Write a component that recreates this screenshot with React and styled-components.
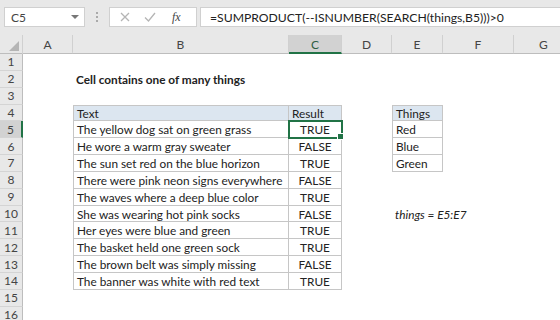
import React from "react";
import styled, { createGlobalStyle } from "styled-components";

const GlobalStyle = createGlobalStyle`
  html, body {
    margin: 0;
    padding: 0;
    background: #fff;
  }
  body {
    font-family: Lato, "Liberation Sans", sans-serif;
    color: #222;
  }
`;

const COLS = ["A", "B", "C", "D", "E", "F", "G"];
const TEMPLATE = "23px 50px 216px 53px 50px 51px 71px 60px";
const GREEN = "#217346";
const LINE = "#c6c6c6";

const Sheet = styled.div`
  width: 560px;
  height: 320px;
  overflow: hidden;
  background: #fff;
`;

const TopBar = styled.div`
  height: 35px;
  box-sizing: border-box;
  padding-top: 7px;
  background: #e8e8e8;
  display: flex;
  align-items: flex-start;
`;

const NameBox = styled.div`
  margin-left: 4px;
  width: 81px;
  height: 20px;
  box-sizing: border-box;
  background: #fff;
  border: 1px solid #d0d0d0;
  display: flex;
  align-items: center;
  justify-content: space-between;
  padding: 0 5px 0 6px;
  font-size: 12px;
  color: #444;
`;

const Arrow = styled.span`
  width: 0;
  height: 0;
  border-left: 4px solid transparent;
  border-right: 4px solid transparent;
  border-top: 4px solid #777;
`;

const Grip = styled.div`
  width: 16px;
  height: 20px;
  margin-left: 4px;
  display: flex;
  flex-direction: column;
  align-items: center;
  justify-content: center;
  gap: 2px;
  & span {
    width: 2px;
    height: 2px;
    background: #aaa;
  }
`;

const FxBox = styled.div`
  margin-left: 4px;
  width: 88px;
  height: 20px;
  box-sizing: border-box;
  background: #fff;
  border: 1px solid #d0d0d0;
  display: flex;
  align-items: center;
  padding-left: 10px;
  gap: 14px;
`;

const Fx = styled.span`
  font-family: "Liberation Serif", serif;
  font-style: italic;
  font-size: 12px;
  color: #444;
  margin-left: 2px;
`;

const Formula = styled.div`
  margin-left: 3px;
  flex: 1;
  height: 20px;
  box-sizing: border-box;
  background: #fff;
  border: 1px solid #d0d0d0;
  border-right: none;
  display: flex;
  align-items: center;
  padding-left: 9px;
  font-size: 12.2px;
  color: #222;
  white-space: nowrap;
`;

const HeadRow = styled.div`
  display: grid;
  grid-template-columns: ${TEMPLATE};
  height: 18px;
  background: #e8e8e8;
  border-bottom: 1px solid #bdbdbd;
`;

const Corner = styled.div`
  position: relative;
  border-right: 1px solid #d0d0d0;
  &::after {
    content: "";
    position: absolute;
    right: 3px;
    bottom: 3px;
    border-left: 10px solid transparent;
    border-bottom: 10px solid #b5b5b5;
  }
`;

const ColHead = styled.div`
  box-sizing: border-box;
  display: flex;
  align-items: center;
  justify-content: center;
  font-size: 12px;
  color: ${(p) => (p.$active ? "#2e5e44" : "#444")};
  background: ${(p) => (p.$active ? "#d2d2d2" : "transparent")};
  border-right: 1px solid #d0d0d0;
  border-bottom: 2px solid ${(p) => (p.$active ? GREEN : "transparent")};
  padding-top: 2px;
`;

const Grid = styled.div`
  display: grid;
  grid-template-columns: ${TEMPLATE};
  grid-auto-rows: 16.85px;
`;

const RowHead = styled.div`
  box-sizing: border-box;
  display: flex;
  align-items: center;
  justify-content: center;
  font-size: 12px;
  color: #444;
  background: ${(p) => (p.$active ? "#d2d2d2" : "#e8e8e8")};
  border-bottom: 1px solid #d4d4d4;
  border-right: ${(p) => (p.$active ? `2px solid ${GREEN}` : "1px solid #bdbdbd")};
`;

const Cell = styled.div`
  position: relative;
  box-sizing: border-box;
  display: flex;
  align-items: center;
  justify-content: ${(p) => (p.$center ? "center" : "flex-start")};
  padding: 1px 3px 0;
  font-size: 11.8px;
  white-space: nowrap;
  font-weight: ${(p) => (p.$bold ? 700 : 400)};
  font-style: ${(p) => (p.$italic ? "italic" : "normal")};
  background: ${(p) => (p.$head ? "#dce6f0" : "transparent")};
  border-right: ${(p) => (p.$boxed ? `1px solid ${LINE}` : "none")};
  border-bottom: ${(p) => (p.$boxed ? `1px solid ${LINE}` : "none")};
  border-left: ${(p) => (p.$left ? `1px solid ${LINE}` : "none")};
  border-top: ${(p) => (p.$top ? `1px solid ${LINE}` : "none")};
  ${(p) =>
    p.$selected &&
    `
    outline: 2px solid ${GREEN};
    outline-offset: -1px;
    z-index: 1;
    &::after {
      content: "";
      position: absolute;
      right: -3px;
      bottom: -3px;
      width: 5px;
      height: 5px;
      background: ${GREEN};
      border: 1px solid #fff;
    }
  `}
`;

const texts = [
  ["The yellow dog sat on green grass", "TRUE"],
  ["He wore a warm gray sweater", "FALSE"],
  ["The sun set red on the blue horizon", "TRUE"],
  ["There were pink neon signs everywhere", "FALSE"],
  ["The waves where a deep blue color", "TRUE"],
  ["She was wearing hot pink socks", "FALSE"],
  ["Her eyes were blue and green", "TRUE"],
  ["The basket held one green sock", "TRUE"],
  ["The brown belt was simply missing", "FALSE"],
  ["The banner was white with red text", "TRUE"],
];
const things = ["Red", "Blue", "Green"];

function cellFor(r, c) {
  if (r === 2 && c === "B") return { text: "Cell contains one of many things", $bold: true };
  if (r === 4 && c === "B") return { text: "Text", $head: true, $boxed: true, $left: true, $top: true };
  if (r === 4 && c === "C") return { text: "Result", $head: true, $boxed: true, $top: true };
  if (r === 4 && c === "E") return { text: "Things", $head: true, $boxed: true, $left: true, $top: true };
  if (r >= 5 && r <= 14 && c === "B") return { text: texts[r - 5][0], $boxed: true, $left: true };
  if (r >= 5 && r <= 14 && c === "C")
    return { text: texts[r - 5][1], $boxed: true, $center: true, $selected: r === 5 };
  if (r >= 5 && r <= 7 && c === "E") return { text: things[r - 5], $boxed: true, $left: true };
  if (r === 10 && c === "E") return { text: "things = E5:E7", $italic: true };
  return { text: "" };
}

const rows = Array.from({ length: 16 }, (_, i) => i + 1);

export default function App() {
  return (
    <Sheet>
      <GlobalStyle />
      <TopBar>
        <NameBox>
          C5
          <Arrow />
        </NameBox>
        <Grip>
          <span />
          <span />
          <span />
        </Grip>
        <FxBox>
          <svg width="10" height="10" viewBox="0 0 10 10">
            <path d="M1 1 L9 9 M9 1 L1 9" stroke="#b5b5b5" strokeWidth="1.3" fill="none" />
          </svg>
          <svg width="12" height="10" viewBox="0 0 12 10">
            <path d="M1 5.5 L4.5 9 L11 1" stroke="#b5b5b5" strokeWidth="1.3" fill="none" />
          </svg>
          <Fx>fx</Fx>
        </FxBox>
        <Formula>=SUMPRODUCT(--ISNUMBER(SEARCH(things,B5)))&gt;0</Formula>
      </TopBar>
      <HeadRow>
        <Corner />
        {COLS.map((c) => (
          <ColHead key={c} $active={c === "C"}>
            {c}
          </ColHead>
        ))}
      </HeadRow>
      <Grid>
        {rows.map((r) => (
          <React.Fragment key={r}>
            <RowHead $active={r === 5}>{r}</RowHead>
            {COLS.map((c) => {
              const { text, ...props } = cellFor(r, c);
              return (
                <Cell key={c} {...props}>
                  {text}
                </Cell>
              );
            })}
          </React.Fragment>
        ))}
      </Grid>
    </Sheet>
  );
}
